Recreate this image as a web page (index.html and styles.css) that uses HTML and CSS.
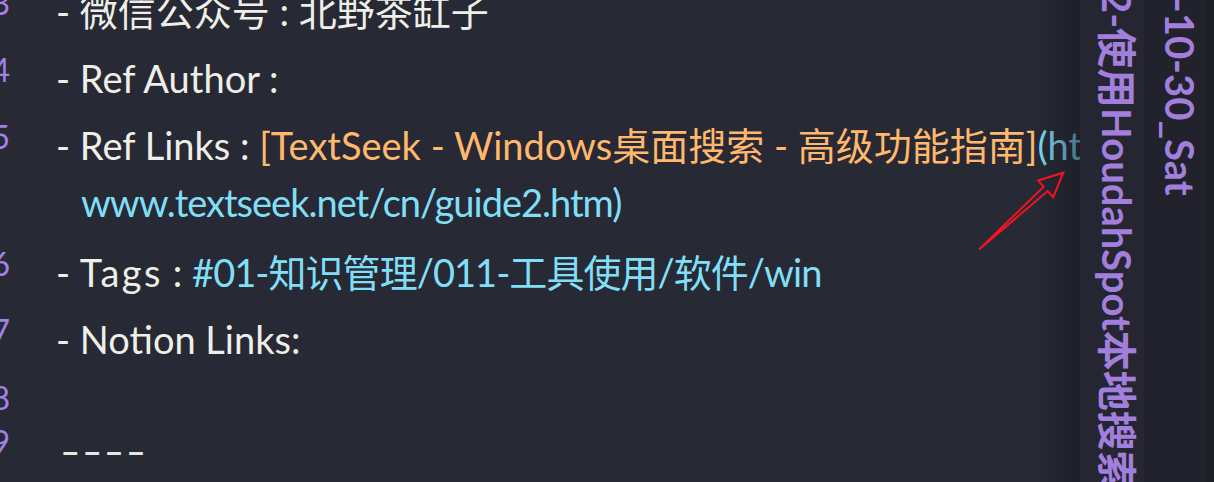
FILE: index.html
```html
<!DOCTYPE html>
<html>
<head>
<meta charset="utf-8">
<link rel="stylesheet" href="styles.css">
</head>
<body>
<div class="app">
  <div class="editor">
    <div class="row r3"><div class="ln"><span>3</span></div><div class="txt">- 微信公众号 : 北野茶缸子</div></div>
    <div class="row"><div class="ln"><span>4</span></div><div class="txt">- Ref Author :</div></div>
    <div class="row r5"><div class="ln"><span>5</span></div><div class="txt"><div class="nowrap">- Ref Links : <span class="orange">[TextSeek - Windows桌面搜索 - 高级功能指南]</span><span class="cyan">(https://</span></div><div class="cont cyan">www.textseek.net/cn/guide2.htm)</div></div></div>
    <div class="row"><div class="ln"><span>6</span></div><div class="txt">- <span class="wide">Tags</span> : <span class="cyan tag">#01-知识管理/011-工具使用/软件/win</span></div></div>
    <div class="row"><div class="ln"><span>7</span></div><div class="txt">- Notion Links:</div></div>
    <div class="row r8"><div class="ln"><span>8</span></div><div class="txt"></div></div>
    <div class="row r9"><div class="ln"><span>9</span></div><div class="txt"><span class="hr">----</span></div></div>
  </div>
  <div class="tabs">
    <div class="tab tab-a"><span class="tab-label">2-使用HoudahSpot本地搜索</span></div>
    <div class="tab tab-b"><span class="tab-label">2021-10-30_Sat</span></div>
    <div class="tab tab-c"></div>
  </div>
  <svg class="arrow" width="1214" height="482" viewBox="0 0 1214 482">
    <polygon points="979.3,249.3 1043.6,186.7 1038.0,180.5 1063.3,172.7 1053.2,197.2 1047.6,191.1" fill="none" stroke="#f21420" stroke-width="2" stroke-linejoin="miter"/>
  </svg>
</div>
</body>
</html>
```
FILE: styles.css
```css
html, body {
  margin: 0;
  padding: 0;
}
body {
  background: #272935;
  font-family: "Lato", "Noto Sans CJK SC", sans-serif;
  color: #efefe8;
  overflow: hidden;
}
.app {
  position: relative;
  display: flex;
  width: 1214px;
  height: 482px;
  overflow: hidden;
}
.editor {
  position: relative;
  flex: 0 0 1080px;
  overflow: hidden;
  background: #272935;
}
.editor::after {
  content: "";
  position: absolute;
  top: 0;
  right: 0;
  bottom: 0;
  width: 45px;
  background: linear-gradient(to right, rgba(22, 23, 30, 0), rgba(22, 23, 30, 0.55));
}
.row {
  display: flex;
  font-size: 38px;
  line-height: 57px;
  margin-bottom: 10px;
}
.r3 {
  margin-top: -17px;
}
.r5 {
  margin-bottom: 13px;
}
.r8 {
  height: 44px;
  margin-bottom: 0;
}
.ln {
  flex: 0 0 10px;
  width: 10px;
  min-width: 0;
  display: flex;
  justify-content: flex-end;
  font-size: 32px;
  line-height: 40px;
  font-weight: 400;
  color: #a381e6;
}
.ln span {
  flex: none;
}
.txt {
  margin-left: 46px;
  white-space: nowrap;
}
.nowrap {
  white-space: nowrap;
}
.cont {
  padding-left: 25px;
  letter-spacing: -1px;
}
.wide {
  letter-spacing: 2.5px;
}
.tag {
  letter-spacing: -0.95px;
}
.orange {
  color: #ffb86c;
}
.cyan {
  color: #80dff7;
}
.hr {
  display: inline-block;
  margin-left: 4px;
  color: #e6e6e0;
  letter-spacing: 1px;
  transform: scaleX(1.45);
  transform-origin: left center;
}
.tabs {
  flex: 1;
  display: flex;
}
.tab {
  overflow: hidden;
  writing-mode: vertical-rl;
  text-orientation: sideways;
  font-size: 40px;
  line-height: 54px;
  font-weight: 700;
  color: #a27fdc;
  white-space: nowrap;
}
.tab-a {
  flex: 0 0 64px;
  background: #252631;
  text-indent: -10px;
}
.tab-b {
  flex: 0 0 63px;
  background: #21222c;
  text-indent: -95px;
}
.tab-c {
  flex: 1;
  background: #1c1d25;
}
.arrow {
  position: absolute;
  left: 0;
  top: 0;
  pointer-events: none;
}
```
